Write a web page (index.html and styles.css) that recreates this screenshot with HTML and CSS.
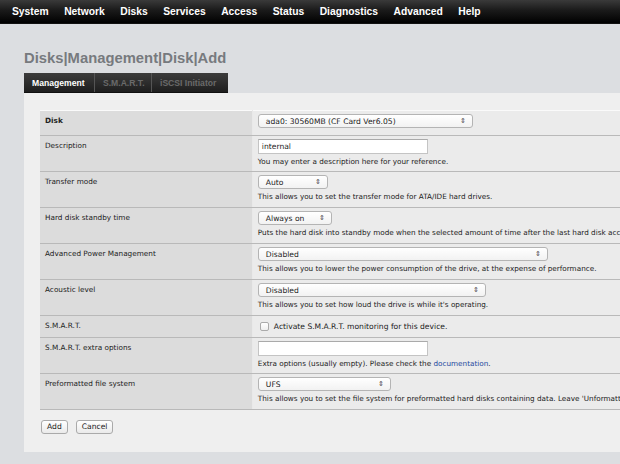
FILE: index.html
```html
<!DOCTYPE html>
<html>
<head>
<meta charset="utf-8">
<link rel="stylesheet" href="styles.css">
</head>
<body>
<nav class="topnav">
  <a>System</a><a>Network</a><a>Disks</a><a>Services</a><a>Access</a><a>Status</a><a>Diagnostics</a><a>Advanced</a><a>Help</a>
</nav>
<main class="main">
  <h1 class="title">Disks|Management|Disk|Add</h1>
  <div class="tabs">
    <span class="tab t1 active">Management</span>
    <span class="tab t2">S.M.A.R.T.</span>
    <span class="tab t3">iSCSI Initiator</span>
  </div>
  <div class="panel">
    <table class="form">
      <tr class="head">
        <td class="lbl">Disk</td>
        <td class="val"><span class="sel w-disk"><span>ada0: 30560MB (CF Card Ver6.05)</span><i>&#8661;</i></span></td>
      </tr>
      <tr>
        <td class="lbl">Description</td>
        <td class="val"><span class="inp">internal</span><div class="hint">You may enter a description here for your reference.</div></td>
      </tr>
      <tr>
        <td class="lbl">Transfer mode</td>
        <td class="val"><span class="sel w-auto"><span>Auto</span><i>&#8661;</i></span><div class="hint">This allows you to set the transfer mode for ATA/IDE hard drives.</div></td>
      </tr>
      <tr>
        <td class="lbl">Hard disk standby time</td>
        <td class="val"><span class="sel w-always"><span>Always on</span><i>&#8661;</i></span><div class="hint">Puts the hard disk into standby mode when the selected amount of time after the last hard disk access has been elapsed.</div></td>
      </tr>
      <tr>
        <td class="lbl">Advanced Power Management</td>
        <td class="val"><span class="sel w-apm"><span>Disabled</span><i>&#8661;</i></span><div class="hint">This allows you to lower the power consumption of the drive, at the expense of performance.</div></td>
      </tr>
      <tr>
        <td class="lbl">Acoustic level</td>
        <td class="val"><span class="sel w-ac"><span>Disabled</span><i>&#8661;</i></span><div class="hint">This allows you to set how loud the drive is while it's operating.</div></td>
      </tr>
      <tr class="short">
        <td class="lbl">S.M.A.R.T.</td>
        <td class="val"><label class="chk"><span class="box"></span>Activate S.M.A.R.T. monitoring for this device.</label></td>
      </tr>
      <tr>
        <td class="lbl">S.M.A.R.T. extra options</td>
        <td class="val"><span class="inp"></span><div class="hint">Extra options (usually empty). Please check the <a class="link">documentation</a>.</div></td>
      </tr>
      <tr>
        <td class="lbl">Preformatted file system</td>
        <td class="val"><span class="sel w-ufs"><span>UFS</span><i>&#8661;</i></span><div class="hint">This allows you to set the file system for preformatted hard disks containing data. Leave 'Unformatted' for unformatted disks and drives.</div></td>
      </tr>
    </table>
    <div class="buttons">
      <span class="btn">Add</span><span class="btn">Cancel</span>
    </div>
  </div>
</main>
</body>
</html>
```

FILE: styles.css
```css
* { box-sizing: border-box; }
html, body { margin: 0; padding: 0; }
body {
  background: #dcdee1;
  font-family: "DejaVu Sans", Verdana, sans-serif;
  width: 620px;
  height: 464px;
  overflow: hidden;
}
.topnav {
  height: 24px;
  background: linear-gradient(#3a3a3a 0%, #1a1a1a 45%, #000 100%);
  display: flex;
  align-items: center;
  padding-left: 12px;
  border-bottom: 1px solid #111;
}
.topnav a {
  color: #fff;
  font-family: "Liberation Sans", Arial, sans-serif;
  font-weight: bold;
  font-size: 10.3px;
  margin-right: 15.5px;
  white-space: nowrap;
}
.main {
  padding-left: 24px;
}
.title {
  margin: 26px 0 0 0;
  font-family: "Liberation Sans", Arial, sans-serif;
  font-size: 14.8px;
  font-weight: bold;
  color: #777a7e;
  height: 23px;
  line-height: 16px;
}
.tabs {
  display: flex;
  width: 204px;
  height: 20px;
  background: linear-gradient(#3c3c3c, #1e1e1e);
  border-bottom: 1px solid #111;
}
.tab {
  font-family: "Liberation Sans", Arial, sans-serif;
  font-weight: bold;
  font-size: 8.6px;
  color: #6a6a6a;
  line-height: 20px;
  padding: 0 0 0 8px;
  border-right: 1px solid #555;
  white-space: nowrap;
}
.t1 { width: 71px; }
.t2 { width: 57px; }
.t3 { width: 76px; border-right: none; }
.tab.active { color: #fff; }
.panel {
  background: #efefef;
  width: 600px;
  height: 359px;
  padding: 17px 0 0 16px;
  overflow: hidden;
}
.form {
  border-collapse: collapse;
  width: 720px;
  font-size: 7.3px;
  color: #222;
}
.form td {
  vertical-align: top;
  border-bottom: 1px solid #b9b9b9;
  border-top: 1px solid #fafafa;
}
.form tr { height: 36px; }
.form tr.head { height: 25px; }
.form tr.short { height: 22px; }
.lbl {
  width: 213px;
  background: #dcdcdc;
  padding: 5px 5px;
  border-right: 1px solid #e9e9e9;
}
.head .lbl { font-weight: bold; }
.val {
  background: #ebebeb;
  padding: 3px 5px 0 5px;
  white-space: nowrap;
}
.sel {
  display: inline-flex;
  justify-content: space-between;
  align-items: center;
  height: 14px;
  background: linear-gradient(#fff, #f2f2f2);
  border: 1px solid #b4b4b4;
  border-radius: 3px;
  padding: 0 6px 0 7px;
  font-size: 7.6px;
  color: #222;
  vertical-align: top;
}
.sel i {
  font-style: normal;
  font-size: 7px;
  color: #444;
}
.w-disk { width: 215px; }
.w-auto { width: 70px; }
.w-always { width: 74px; }
.w-apm { width: 290px; }
.w-ac { width: 228px; }
.w-ufs { width: 133px; }
.inp {
  display: inline-block;
  width: 170px;
  height: 15px;
  background: #fff;
  border: 1px solid #c4c4c4;
  border-top-color: #aaa;
  padding: 2px 3px;
  font-size: 7.6px;
  line-height: 10px;
  vertical-align: top;
}
.hint {
  margin-top: 3px;
  font-size: 7.25px;
  line-height: 10px;
}
.link { color: #1f4aa0; }
.chk {
  display: flex;
  align-items: center;
  padding: 3px 0 0 2px;
  font-size: 7.6px;
}
.box {
  width: 9px;
  height: 9px;
  border: 1px solid #aaa;
  border-radius: 2px;
  background: linear-gradient(#fff, #eee);
  margin-right: 5px;
}
.buttons {
  display: flex;
  gap: 8px;
  margin-top: 10px;
  padding-left: 1px;
}
.btn {
  display: inline-block;
  height: 14px;
  line-height: 12px;
  padding: 0 5px;
  border: 1px solid #aaa;
  border-radius: 3px;
  background: linear-gradient(#fff, #eaeaea);
  font-size: 7.6px;
  color: #222;
}
```
